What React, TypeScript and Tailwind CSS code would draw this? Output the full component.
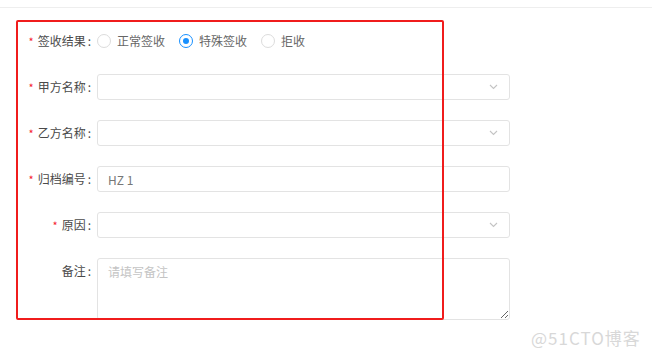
import React from 'react';

const font = { fontFamily: '"Noto Sans CJK SC", "Noto Sans", sans-serif' };

type FieldProps = {
  label: string;
  required?: boolean;
  children: React.ReactNode;
  tall?: boolean;
};

// one form row: right-aligned label + control
const Field: React.FC<FieldProps> = ({ label, required, children, tall }) => (
  <div className={`flex ${tall ? 'items-start' : 'items-center'} mb-[20px]`}>
    <div className="w-[97px] shrink-0 pr-[6px] text-right text-[12px] leading-[26px] text-[#4a4a4a]">
      {required && <span className="mr-[4px] text-[11px] text-[#f5222d]">*</span>}
      {label}
      <span className="ml-[2px]">:</span>
    </div>
    {children}
  </div>
);

const Chevron = () => (
  <svg width="9" height="6" viewBox="0 0 9 6" className="shrink-0">
    <path d="M1 1 L4.5 4.5 L8 1" fill="none" stroke="#c4c4c4" strokeWidth="1.1" />
  </svg>
);

const SelectBox = () => (
  <div className="flex h-[26px] w-[413px] items-center justify-end rounded-[3px] border border-[#e3e3e3] bg-white pr-[11px]">
    <Chevron />
  </div>
);

const Radio: React.FC<{ label: string; checked?: boolean }> = ({ label, checked }) => (
  <label className="mr-[14px] flex items-center">
    <span
      className={`flex h-[14px] w-[14px] items-center justify-center rounded-full border bg-white ${
        checked ? 'border-[#1890ff]' : 'border-[#dcdcdc]'
      }`}
    >
      {checked && <span className="h-[6px] w-[6px] rounded-full bg-[#1890ff]" />}
    </span>
    <span className="ml-[6px] text-[12px] text-[#666666]">{label}</span>
  </label>
);

export default function App() {
  return (
    <div className="relative h-[362px] w-[672px] overflow-hidden bg-white" style={font}>
      {/* top rule */}
      <div className="mr-[20px] h-[8px] border-b border-[#eeeeee]" />

      {/* form */}
      <div className="pt-[20px]">
        <Field label="签收结果" required>
          <div className="flex h-[26px] items-center">
            <Radio label="正常签收" />
            <Radio label="特殊签收" checked />
            <Radio label="拒收" />
          </div>
        </Field>
        <Field label="甲方名称" required>
          <SelectBox />
        </Field>
        <Field label="乙方名称" required>
          <SelectBox />
        </Field>
        <Field label="归档编号" required>
          <input
            defaultValue="HZ 1"
            className="h-[26px] w-[413px] rounded-[3px] border border-[#e3e3e3] px-[10px] text-[12px] text-[#777777] outline-none"
            style={font}
          />
        </Field>
        <Field label="原因" required>
          <SelectBox />
        </Field>
        <Field label="备注" tall>
          <textarea
            placeholder="请填写备注"
            className="h-[62px] w-[413px] rounded-[3px] border border-[#e3e3e3] px-[10px] py-[4px] text-[12px] text-[#777777] outline-none placeholder:text-[#c4c4c4]"
            style={font}
          />
        </Field>
      </div>

      {/* annotation box */}
      <div className="pointer-events-none absolute left-[16px] top-[20px] h-[300px] w-[428px] rounded-[2px] border-2 border-[#f01c1c]" />

      {/* watermark */}
      <div className="pointer-events-none absolute left-[531px] top-[325px] text-[17px] tracking-[1px] text-[#d8d8d8]">
        @51CTO博客
      </div>
    </div>
  );
}
